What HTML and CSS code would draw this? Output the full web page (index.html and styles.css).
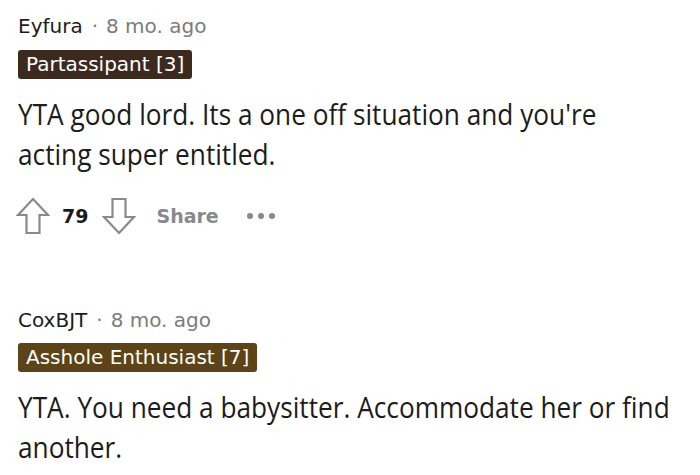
FILE: index.html
```html
<!DOCTYPE html>
<html>
<head>
<meta charset="utf-8">
<link rel="stylesheet" href="styles.css">
</head>
<body>
<div class="thread">
  <div class="comment">
    <div class="meta"><span class="author">Eyfura</span><span class="dot">·</span><span class="time">8 mo. ago</span></div>
    <div class="flair flair-dark">Partassipant [3]</div>
    <p class="body">YTA good lord. Its a one off situation and you're acting super entitled.</p>
    <div class="actions">
      <svg class="arrow" viewBox="0 0 34 38" width="34" height="38"><path d="M17 2 L32 18 H23.5 V36 H10.5 V18 H2 Z" fill="none" stroke="#8a8a8a" stroke-width="2.2" stroke-linejoin="miter"/></svg>
      <span class="score">79</span>
      <svg class="arrow" viewBox="0 0 34 38" width="34" height="38"><path d="M17 36 L32 20 H23.5 V2 H10.5 V20 H2 Z" fill="none" stroke="#8a8a8a" stroke-width="2.2" stroke-linejoin="miter"/></svg>
      <span class="share">Share</span>
      <span class="more"><i></i><i></i><i></i></span>
    </div>
  </div>
  <div class="comment second">
    <div class="meta"><span class="author">CoxBJT</span><span class="dot">·</span><span class="time">8 mo. ago</span></div>
    <div class="flair flair-olive">Asshole Enthusiast [7]</div>
    <p class="body">YTA. You need a babysitter. Accommodate her or find another.</p>
  </div>
</div>
</body>
</html>
```
FILE: styles.css
```css
html, body {
  margin: 0;
  padding: 0;
  background: #ffffff;
  overflow: hidden;
}
.thread {
  padding: 14px 0 0 18px;
  font-family: "DejaVu Sans", "Noto Sans", sans-serif;
}
.comment.second {
  margin-top: 72px;
}
.meta {
  height: 24px;
  line-height: 24px;
  font-size: 20px;
  display: flex;
  align-items: center;
}
.author {
  color: #1c1c1c;
}
.dot {
  color: #7c7c7c;
  margin: 0 8px 0 9px;
}
.time {
  color: #7c7c7c;
}
.flair {
  width: fit-content;
  margin-top: 12px;
  height: 29px;
  line-height: 29px;
  padding: 0 8px;
  border-radius: 3px;
  color: #ffffff;
  font-family: "DejaVu Sans", "Noto Sans", sans-serif;
  font-size: 20px;
}
.second .flair {
  margin-top: 11px;
}
.flair-dark {
  background: #3d2a1f;
}
.flair-olive {
  background: #5c4318;
}
.body {
  margin: 15px 0 0 0;
  width: 750px;
  font-family: "Open Sans", "Noto Sans", sans-serif;
  font-size: 30px;
  line-height: 40px;
  color: #1c1c1c;
  transform: scaleX(0.874);
  transform-origin: left top;
}
.second .body {
  margin-top: 15px;
}
.actions {
  margin-top: 22px;
  height: 40px;
  display: flex;
  align-items: center;
  margin-left: -2px;
}
.arrow {
  display: block;
}
.score {
  font-family: "DejaVu Sans", sans-serif;
  font-weight: 700;
  font-size: 19px;
  color: #1a1a1b;
  margin: 0 14px 0 12px;
}
.share {
  font-family: "DejaVu Sans", sans-serif;
  font-weight: 700;
  font-size: 19px;
  color: #878a8c;
  margin-left: 20px;
}
.more {
  display: flex;
  gap: 5px;
  margin-left: 28px;
}
.more i {
  display: block;
  width: 6px;
  height: 6px;
  border-radius: 50%;
  background: #878a8c;
}
```
